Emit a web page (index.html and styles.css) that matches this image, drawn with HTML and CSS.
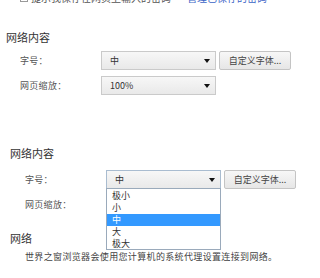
FILE: index.html
```html
<!DOCTYPE html>
<html lang="zh">
<head>
<meta charset="utf-8">
<link rel="stylesheet" href="styles.css">
</head>
<body>
<div class="cutline">
  <span class="cb"></span><span class="cuttext">提示我保存在网页上输入的密码</span><span class="link">管理已保存的密码</span>
</div>

<section class="sec sec1">
  <h2 class="head">网络内容</h2>
  <div class="rows">
    <div class="row">
      <span class="label">字号：</span>
      <div class="select"><span>中</span><i class="arrow"></i></div>
      <button class="btn">自定义字体...</button>
    </div>
    <div class="row">
      <span class="label">网页缩放：</span>
      <div class="select"><span>100%</span><i class="arrow"></i></div>
    </div>
  </div>
</section>

<section class="sec sec2">
  <h2 class="head">网络内容</h2>
  <div class="rows">
    <div class="row">
      <span class="label">字号：</span>
      <div class="select focus"><span>中</span><i class="arrow"></i>
        <ul class="list">
          <li>极小</li>
          <li>小</li>
          <li class="sel">中</li>
          <li>大</li>
          <li>极大</li>
        </ul>
      </div>
      <button class="btn">自定义字体...</button>
    </div>
    <div class="row">
      <span class="label">网页缩放：</span>
      <div class="select"></div>
    </div>
  </div>
  <h2 class="head head-net">网络</h2>
  <p class="para">世界之窗浏览器会使用您计算机的系统代理设置连接到网络。</p>
</section>
</body>
</html>
```

FILE: styles.css
```css
html, body {
  margin: 0;
  padding: 0;
  background: #fff;
  overflow: hidden;
}
body {
  width: 315px;
  height: 278px;
  font-family: "Noto Sans CJK SC", "Noto Sans", sans-serif;
  color: #444;
}
.cutline {
  margin-top: -8px;
  height: 12px;
  line-height: 12px;
  padding-left: 20px;
  font-size: 10px;
  color: #555;
  display: flex;
  align-items: center;
  white-space: nowrap;
}
.cb {
  width: 6px;
  height: 6px;
  border: 1px solid #999;
  margin-right: 3px;
}
.link {
  color: #3a63c6;
  margin-left: 16px;
}
.sec1 {
  padding-left: 6px;
  margin-top: 26px;
}
.head {
  margin: 0;
  font-size: 11px;
  line-height: 14px;
  font-weight: normal;
  color: #333;
}
.rows {
  display: flex;
  flex-direction: column;
  gap: 6px;
}
.sec1 .rows {
  margin-top: 7px;
  padding-left: 14px;
}
.row {
  display: flex;
  align-items: center;
  height: 19px;
}
.label {
  width: 81px;
  font-size: 9px;
  color: #555;
  letter-spacing: 0.3px;
}
.select {
  position: relative;
  box-sizing: border-box;
  width: 115px;
  height: 19px;
  border: 1px solid #cacaca;
  background: linear-gradient(#f7f7f7, #e9e9e9);
  font-size: 9px;
  line-height: 17px;
  padding-left: 8px;
  color: #333;
}
.arrow {
  position: absolute;
  right: 5px;
  top: 7px;
  width: 0;
  height: 0;
  border-left: 3px solid transparent;
  border-right: 3px solid transparent;
  border-top: 4px solid #111;
}
.btn {
  box-sizing: border-box;
  margin-left: 3px;
  width: 72px;
  height: 19px;
  border: 1px solid #c4c4c4;
  border-radius: 2px;
  background: linear-gradient(#f7f7f7, #e6e6e6);
  font-family: inherit;
  font-size: 9px;
  color: #444;
  padding: 0;
}
.sec2 {
  padding-left: 10px;
  margin-top: 51px;
}
.sec2 .rows {
  margin-top: 10px;
  padding-left: 15px;
}
.select.focus {
  border-color: #a9bcd0;
}
.list {
  position: absolute;
  left: -1px;
  top: 17px;
  z-index: 2;
  box-sizing: border-box;
  width: 115px;
  margin: 0;
  padding: 1px 0 0 0;
  list-style: none;
  background: #fff;
  border: 1px solid #9aaabb;
  height: 62px;
}
.list li {
  height: 12px;
  line-height: 12px;
  padding-left: 5px;
  color: #333;
}
.list li.sel {
  background: #3399ff;
  color: #fff;
}
.head-net {
  margin-top: 17px;
}
.para {
  margin: 6px 0 0 15px;
  font-size: 9px;
  line-height: 12px;
  color: #444;
  letter-spacing: 0.35px;
  white-space: nowrap;
}
```
